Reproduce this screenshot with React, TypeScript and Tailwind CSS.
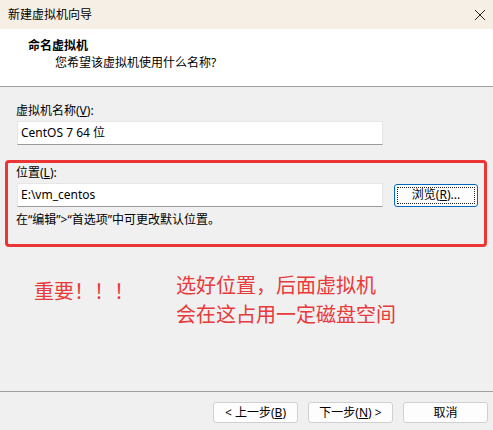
import React from 'react';

const ui = { fontFamily: '"Segoe UI", "Noto Sans", "Noto Sans CJK SC", sans-serif' };

const WizardButton = ({ children, focused = false }: { children: React.ReactNode; focused?: boolean }) => (
  <button
    className={
      'h-[21px] w-[85px] rounded-[3px] bg-[#fdfdfd] text-[12px] leading-none text-black flex items-center justify-center ' +
      (focused ? 'border border-[#0067c0]' : 'border border-[#d0d0d0]')
    }
  >
    {children}
  </button>
);

const App = () => {
  return (
    <div className="w-[493px] h-[430px] bg-[#f0f0f0] flex flex-col overflow-hidden text-black" style={ui}>
      {/* Title bar */}
      <div className="h-[29px] bg-[#f5efe6] flex items-center justify-between pl-[8px] pr-[6px]">
        <span className="text-[12px]">新建虚拟机向导</span>
        <svg width="12" height="12" viewBox="0 0 12 12" className="mr-[1px]">
          <path d="M1 1 L11 11 M11 1 L1 11" stroke="#222" strokeWidth="1" />
        </svg>
      </div>

      {/* Header */}
      <div className="h-[58px] bg-white border-b border-[#a0a0a0] pl-[28px] pt-[9px]">
        <div className="text-[12px] font-bold leading-[16px]">命名虚拟机</div>
        <div className="text-[12px] leading-[16px] pl-[27px] mt-[1px]">您希望该虚拟机使用什么名称?</div>
      </div>

      {/* Body */}
      <div className="flex-1 flex flex-col">
        <div className="pl-[16px] pt-[16px]">
          <div className="text-[12px] leading-[16px]">
            虚拟机名称(<span className="underline">V</span>):
          </div>
          <div className="mt-[2px] ml-[1px] w-[366px] h-[24px] bg-white border border-[#e6e6e6] border-b-[#9a9a9a] flex items-center pl-[3px] text-[12px]">
            CentOS 7 64 位
          </div>
        </div>

        {/* Location group, highlighted */}
        <div className="mt-[15px] ml-[5px] w-[482px] h-[87px] border-[3px] border-[#ec3535] rounded-[4px] pl-[8px] pt-[2px]">
          <div className="text-[12px] leading-[16px]">
            位置(<span className="underline">L</span>):
          </div>
          <div className="mt-[2px] flex items-center">
            <div className="ml-[1px] w-[366px] h-[24px] bg-white border border-[#e6e6e6] border-b-[#9a9a9a] flex items-center pl-[3px] text-[12px]">
              E:\vm_centos
            </div>
            <div className="ml-[11px] w-[84px] h-[23px] rounded-[3px] border border-[#0067c0] bg-[#fdfdfd] p-[2px]">
              <div className="w-full h-full border border-dotted border-[#222] flex items-center justify-center text-[12px] leading-none">
                浏览(<span className="underline">R</span>)...
              </div>
            </div>
          </div>
          <div className="text-[12px] leading-[16px] mt-[5px]">在“编辑”&gt;“首选项”中可更改默认位置。</div>
        </div>

        {/* Annotation */}
        <div className="flex pl-[34px] pt-[23px] text-[#e83a3a] text-[20px] leading-[29px]" style={{ fontFamily: '"Noto Sans CJK SC", sans-serif' }}>
          <div className="w-[142px] pt-[6px]">重要！！！</div>
          <div>
            <div>选好位置，后面虚拟机</div>
            <div>会在这占用一定磁盘空间</div>
          </div>
        </div>
      </div>

      {/* Footer */}
      <div className="h-[39px] border-t border-[#a0a0a0] flex justify-end items-start pt-[10px] pr-[5px] gap-[10px]">
        <WizardButton>
          &lt; 上一步(<span className="underline">B</span>)
        </WizardButton>
        <WizardButton>
          下一步(<span className="underline">N</span>) &gt;
        </WizardButton>
        <WizardButton>取消</WizardButton>
      </div>
    </div>
  );
};

export default App;
